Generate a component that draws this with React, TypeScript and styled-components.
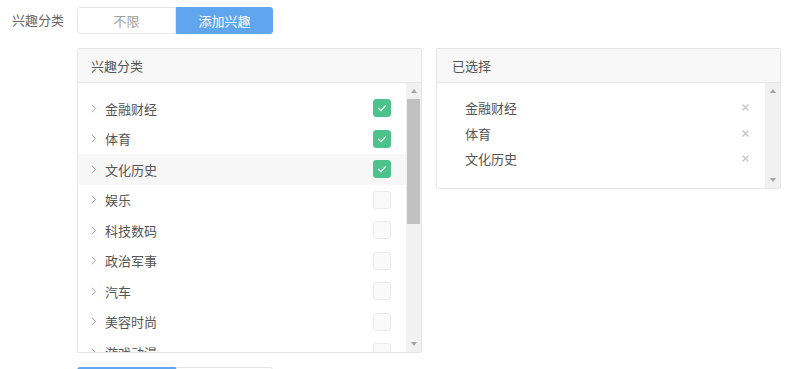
import React from "react";
import styled, { createGlobalStyle, css } from "styled-components";

const GlobalStyle = createGlobalStyle`
  html, body { margin: 0; padding: 0; background: #fff; }
  body {
    font-family: "Noto Sans CJK SC", "Noto Sans", sans-serif;
    font-size: 13px;
    color: #555;
  }
  * { box-sizing: border-box; }
`;

const Page = styled.div`
  width: 791px;
  height: 369px;
  overflow: hidden;
  padding: 7px 0 0 12px;
`;

const FieldRow = styled.div`
  display: flex;
  align-items: flex-start;
`;

const FieldLabel = styled.div`
  width: 65px;
  flex: none;
  line-height: 26px;
  color: #666;
`;

const FieldBody = styled.div`
  display: flex;
  flex-direction: column;
  gap: 14px;
`;

const Segmented = styled.div`
  display: flex;
  width: 196px;
  height: 27px;
`;

const Segment = styled.div<{ $active?: boolean; $first?: boolean; $w: number }>`
  width: ${(p) => p.$w}px;
  flex: none;
  display: flex;
  align-items: center;
  justify-content: center;
  border: 1px solid #e6e6e6;
  color: #a0a0a0;
  background: #fff;
  border-radius: ${(p) => (p.$first ? "3px 0 0 3px" : "0 3px 3px 0")};
  ${(p) =>
    p.$active &&
    css`
      background: #5fa6ef;
      border-color: #5fa6ef;
      color: #fff;
    `}
`;

const Panels = styled.div`
  display: flex;
  align-items: flex-start;
  gap: 14px;
`;

const Panel = styled.div`
  width: 345px;
  border: 1px solid #e6e6e6;
  border-radius: 2px;
  background: #fff;
  display: flex;
  flex-direction: column;
`;

const PanelHeader = styled.div<{ $pad: number }>`
  height: 34px;
  display: flex;
  align-items: center;
  padding-left: ${(p) => p.$pad}px;
  padding-bottom: 1px;
  background: #f8f8f8;
  border-bottom: 1px solid #e6e6e6;
  color: #555;
`;

const PanelBody = styled.div<{ $h: number }>`
  height: ${(p) => p.$h}px;
  display: flex;
  overflow: hidden;
`;

const List = styled.div<{ $top: number }>`
  flex: 1;
  min-width: 0;
  padding-top: ${(p) => p.$top}px;
  display: flex;
  flex-direction: column;
`;

const CategoryRow = styled.div<{ $hover?: boolean }>`
  height: 30.5px;
  flex: none;
  display: flex;
  align-items: center;
  padding: 0 15px 0 13px;
  background: ${(p) => (p.$hover ? "#f7f7f7" : "transparent")};
  color: #555;
`;

const Chevron = styled.svg`
  width: 6px;
  height: 9px;
  margin-right: 8px;
  flex: none;
`;

const RowText = styled.span`
  flex: 1;
`;

const Check = styled.div<{ $checked?: boolean }>`
  width: 18px;
  height: 18px;
  border-radius: 3px;
  flex: none;
  display: flex;
  align-items: center;
  justify-content: center;
  border: 1px solid ${(p) => (p.$checked ? "#4cc38b" : "#ebebeb")};
  background: ${(p) => (p.$checked ? "#4cc38b" : "#fafafa")};
`;

const SelectedRow = styled.div`
  height: 25.5px;
  flex: none;
  display: flex;
  align-items: center;
  padding: 0 16px 0 28px;
  color: #555;
`;

const CloseIcon = styled.svg`
  width: 7px;
  height: 7px;
  flex: none;
`;

const ScrollTrack = styled.div`
  width: 15px;
  flex: none;
  background: #f1f1f1;
  display: flex;
  flex-direction: column;
`;

const ArrowBtn = styled.div<{ $down?: boolean }>`
  height: 16px;
  flex: none;
  display: flex;
  align-items: center;
  justify-content: center;
  &::before {
    content: "";
    width: 0;
    height: 0;
    border-left: 3.5px solid transparent;
    border-right: 3.5px solid transparent;
    ${(p) =>
      p.$down
        ? css`border-top: 4px solid #a3a3a3;`
        : css`border-bottom: 4px solid #a3a3a3;`}
  }
`;

const Thumb = styled.div<{ $h: number }>`
  height: ${(p) => p.$h}px;
  margin: 0 1px;
  background: #c1c1c1;
  flex: none;
`;

const TrackSpace = styled.div`
  flex: 1;
`;

const categories = [
  { name: "金融财经", checked: true },
  { name: "体育", checked: true },
  { name: "文化历史", checked: true, hover: true },
  { name: "娱乐" },
  { name: "科技数码" },
  { name: "政治军事" },
  { name: "汽车" },
  { name: "美容时尚" },
  { name: "游戏动漫" },
];

const selected = ["金融财经", "体育", "文化历史"];

function Scrollbar({ thumb }: { thumb?: number }) {
  return (
    <ScrollTrack>
      <ArrowBtn />
      {thumb ? <Thumb $h={thumb} /> : null}
      <TrackSpace />
      <ArrowBtn $down />
    </ScrollTrack>
  );
}

export default function App() {
  return (
    <>
      <GlobalStyle />
      <Page>
        <FieldRow>
          <FieldLabel>兴趣分类</FieldLabel>
          <FieldBody>
            <Segmented>
              <Segment $first $w={99}>不限</Segment>
              <Segment $active $w={97}>添加兴趣</Segment>
            </Segmented>
            <Panels>
              <Panel>
                <PanelHeader $pad={13}>兴趣分类</PanelHeader>
                <PanelBody $h={269}>
                  <List $top={10}>
                    {categories.map((c) => (
                      <CategoryRow key={c.name} $hover={c.hover}>
                        <Chevron viewBox="0 0 6 9">
                          <polyline
                            points="1,0.8 4.6,4.5 1,8.2"
                            fill="none"
                            stroke="#9a9a9a"
                            strokeWidth="1"
                          />
                        </Chevron>
                        <RowText>{c.name}</RowText>
                        <Check $checked={c.checked}>
                          {c.checked ? (
                            <svg width="10" height="8" viewBox="0 0 10 8">
                              <polyline
                                points="1.2,4 4,6.6 8.8,1.4"
                                fill="none"
                                stroke="#fff"
                                strokeWidth="1.2"
                              />
                            </svg>
                          ) : null}
                        </Check>
                      </CategoryRow>
                    ))}
                  </List>
                  <Scrollbar thumb={125} />
                </PanelBody>
              </Panel>
              <Panel>
                <PanelHeader $pad={15}>已选择</PanelHeader>
                <PanelBody $h={105}>
                  <List $top={12}>
                    {selected.map((s) => (
                      <SelectedRow key={s}>
                        <RowText>{s}</RowText>
                        <CloseIcon viewBox="0 0 7 7">
                          <path
                            d="M0.5 0.5 L6.5 6.5 M6.5 0.5 L0.5 6.5"
                            stroke="#c4c4c4"
                            strokeWidth="1.2"
                          />
                        </CloseIcon>
                      </SelectedRow>
                    ))}
                  </List>
                  <Scrollbar />
                </PanelBody>
              </Panel>
            </Panels>
            <Segmented>
              <Segment $first $active $w={99}>不限</Segment>
              <Segment $w={97}>添加兴趣</Segment>
            </Segmented>
          </FieldBody>
        </FieldRow>
      </Page>
    </>
  );
}
